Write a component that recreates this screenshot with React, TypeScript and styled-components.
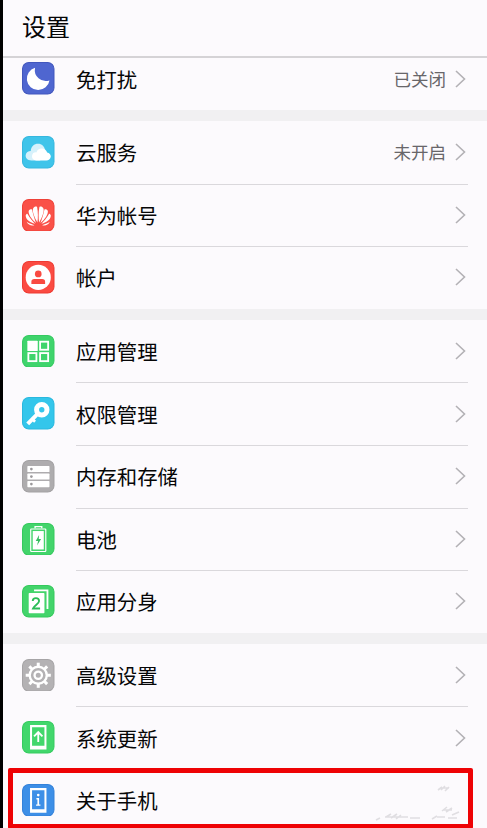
import React from 'react';
import styled, { createGlobalStyle } from 'styled-components';

const GlobalStyle = createGlobalStyle`
  * { box-sizing: border-box; }
  html, body { margin: 0; overflow: hidden; }
  body { background: #fcfafd; }
`;

const Screen = styled.main`
  width: 487px;
  height: 828px;
  overflow: hidden;
  position: relative;
  border-left: 3px solid #000;
  background: #fcfafd;
  color: #060607;
  font-family: 'Noto Sans CJK SC', 'Noto Sans', sans-serif;
`;

const Header = styled.header`
  height: 58px;
  padding: 0 0 5px 19px;
  display: flex;
  align-items: center;
  border-bottom: 2px solid #d5d3d6;
`;

const Title = styled.h1`
  margin: 0;
  font-size: 24px;
  line-height: 36px;
  font-weight: 400;
`;

const Group = styled.section<{ $gap?: boolean }>`
  border-bottom: ${p => (p.$gap ? '11px solid #f1f0f2' : '0')};
`;

const Row = styled.div<{ $short?: boolean }>`
  height: ${p => (p.$short ? '52px' : '62.6px')};
  padding: ${p => (p.$short ? '0 19px 11px' : '0 19px')};
  display: flex;
  align-items: center;
`;

const Content = styled.div<{ $line?: boolean }>`
  flex: 1;
  align-self: stretch;
  margin: 0 0 -1px 21.5px;
  display: flex;
  align-items: center;
  border-bottom: 1px solid ${p => (p.$line ? '#dad8dc' : 'transparent')};
`;

const Label = styled.span`
  flex: 1;
  font-size: 20.4px;
  line-height: 30px;
`;

const Value = styled.span`
  font-size: 17.5px;
  line-height: 26px;
  color: #68666a;
  margin-right: 9px;
`;

const Chevron = styled.svg`
  width: 11px;
  height: 18px;
  margin-right: 2px;
  fill: none;
  stroke: #b3b1b5;
  stroke-width: 1.6;
`;

const Tile = styled.svg`
  width: 32.5px;
  height: 32.5px;
  flex: none;
  display: block;
`;

const Highlight = styled.div`
  position: absolute;
  left: 5px;
  top: 768px;
  width: 465px;
  height: 61px;
  border: 5px solid #ee0205;
  border-radius: 2px;
`;

const Smudges = styled.svg`
  position: absolute;
  left: 370px;
  top: 780px;
  width: 94px;
  height: 42px;
  fill: none;
  stroke: #e0dee2;
  stroke-width: 1.6;
  filter: blur(0.5px);
`;

type IconName =
  | 'moon' | 'cloud' | 'huawei' | 'person' | 'apps' | 'key' | 'storage'
  | 'battery' | 'twin' | 'gear' | 'update' | 'about';

// Petals of the left half of the flower, mirrored for the right half.
const petals = [
  'M46 70C36 54 29 34 34 27C38 22 43 22 45 24C48 38 48 56 46 70Z',
  'M42 72C28 60 18 45 20 35C23 31 27 30 30 31C33 46 38 61 42 72Z',
  'M39 74C25 70 11 62 11 49C12 46 14 44 16 44C23 56 32 67 39 74Z',
  'M37 78C29 80 19 79 14 68C22 73 30 76 37 78Z',
];

const glyphs: Record<IconName, { bg: string; edge: string; art: React.ReactNode }> = {
  moon: {
    bg: '#4f66d0', edge: '#4257bd',
    art: <path fill="#fff" d="M39 17A34 34 0 1 0 82 55A33 33 0 0 1 39 17Z" />,
  },
  cloud: {
    bg: '#3fc4ea', edge: '#36b7de',
    art: (
      <>
        <path fill="#d6f1fb" d="M28 73C16 73 10 66 11 57C12 49 19 45 26 45C27 31 36 23 48 23C59 23 67 31 69 42L54 73Z" />
        <path fill="#fff" d="M43 73C34 73 29 66 30 59C31 51 37 48 43 49C45 41 51 37 59 37C68 37 73 43 75 49C82 50 86 56 86 61C85 69 79 73 73 73Z" />
      </>
    ),
  },
  huawei: {
    bg: '#fa5148', edge: '#ee4138',
    art: (
      <g fill="#fff">
        {petals.map(d => <path key={d} d={d} />)}
        <g transform="translate(97 0) scale(-1 1)">
          {petals.map(d => <path key={d} d={d} />)}
        </g>
      </g>
    ),
  },
  person: {
    bg: '#fb4b42', edge: '#ee3a32',
    art: (
      <>
        <circle cx="48.5" cy="49" r="37.5" fill="#fff" />
        <circle cx="48.5" cy="38.5" r="10" fill="#f94a41" />
        <path fill="#f94a41" d="M28 69V62Q28 54 37 54H60Q69 54 69 62V69Z" />
      </>
    ),
  },
  apps: {
    bg: '#3fd46c', edge: '#35ca61',
    art: (
      <g fill="none" stroke="#fff" strokeWidth="5.5">
        <rect x="16" y="17" width="31" height="31" rx="2" fill="#fff" stroke="none" />
        <rect x="54" y="20" width="24" height="24" />
        <rect x="19" y="54" width="24" height="24" />
        <rect x="54" y="54" width="24" height="24" />
      </g>
    ),
  },
  key: {
    bg: '#34c6eb', edge: '#2ab8de',
    art: (
      <g fill="none" stroke="#fff">
        <circle cx="59" cy="38" r="15.5" strokeWidth="15" />
        <path strokeWidth="12" d="M48 49L17 80" />
        <path strokeWidth="8" d="M29 64L39 74" />
      </g>
    ),
  },
  storage: {
    bg: '#aeacae', edge: '#a3a1a3',
    art: (
      <>
        {[18, 40.5, 63].map(y => (
          <g key={y}>
            <rect x="16" y={y} width="66" height="18" rx="2" fill="#fff" />
            <circle cx="28" cy={y + 9} r="4" fill="#9b999b" />
          </g>
        ))}
      </>
    ),
  },
  battery: {
    bg: '#43d46b', edge: '#35c95d',
    art: (
      <>
        <path d="M39 16V11H59V16" fill="none" stroke="#fff" strokeWidth="4" />
        <rect x="26" y="18" width="45" height="67" rx="2" fill="none" stroke="#fff" strokeWidth="3.5" />
        <rect x="32" y="24" width="33" height="55" fill="#fff" />
        <path d="M51 36L41 54H48L45 67L57 48H50Z" fill="#36bd60" />
      </>
    ),
  },
  twin: {
    bg: '#43d46b', edge: '#35c95d',
    art: (
      <>
        <path d="M36 16H76V72" fill="none" stroke="#fff" strokeWidth="5.5" />
        <rect x="20" y="24" width="47" height="60" rx="2" fill="#fff" />
        <path d="M32 48C32 36 51 36 51 48C51 56 38 60 33 70H54" fill="none" stroke="#2bbd57" strokeWidth="5.5" />
      </>
    ),
  },
  gear: {
    bg: '#b4b2b4', edge: '#a6a4a6',
    art: (
      <g fill="none" stroke="#fff">
        {[0, 45, 90, 135, 180, 225, 270, 315].map(a => (
          <path key={a} strokeWidth="9" d="M48.5 11V24" transform={`rotate(${a} 48.5 48.5)`} />
        ))}
        <circle cx="48.5" cy="48.5" r="25.5" strokeWidth="7" />
        <circle cx="48.5" cy="48.5" r="11" strokeWidth="7" />
      </g>
    ),
  },
  update: {
    bg: '#42d76c', edge: '#36cb60',
    art: (
      <g fill="none" stroke="#fff">
        <path d="M24 12H73V85H24Z M30 19V74H67V19Z" fill="#fff" fillRule="evenodd" stroke="none" />
        <path strokeWidth="5.5" d="M48.5 63V33M36 46L48.5 33L61 46" />
      </g>
    ),
  },
  about: {
    bg: '#3d8fe7', edge: '#3482da',
    art: (
      <g fill="#fff">
        <path d="M24 12H73V86H24Z M30 19V75H67V19Z" fillRule="evenodd" />
        <circle cx="48.5" cy="33" r="4" />
        <path d="M43 42H51V61H55V65H42V61H46V46H43Z" />
      </g>
    ),
  },
};

function Icon({ name }: { name: IconName }) {
  const { bg, edge, art } = glyphs[name];
  return (
    <Tile viewBox="0 0 97 97" aria-hidden="true">
      <rect x="1.5" y="1.5" width="94" height="94" rx="19" fill={bg} stroke={edge} strokeWidth="3" />
      {art}
    </Tile>
  );
}

interface Item {
  icon: IconName;
  label: string;
  value?: string;
  noArrow?: boolean;
}

const groups: Item[][] = [
  [{ icon: 'moon', label: '免打扰', value: '已关闭' }],
  [
    { icon: 'cloud', label: '云服务', value: '未开启' },
    { icon: 'huawei', label: '华为帐号' },
    { icon: 'person', label: '帐户' },
  ],
  [
    { icon: 'apps', label: '应用管理' },
    { icon: 'key', label: '权限管理' },
    { icon: 'storage', label: '内存和存储' },
    { icon: 'battery', label: '电池' },
    { icon: 'twin', label: '应用分身' },
  ],
  [
    { icon: 'gear', label: '高级设置' },
    { icon: 'update', label: '系统更新' },
    { icon: 'about', label: '关于手机', noArrow: true },
  ],
];

export default function App() {
  return (
    <>
      <GlobalStyle />
      <Screen>
        <Header><Title>设置</Title></Header>
        {groups.map((items, g) => (
          <Group key={g} $gap={g < groups.length - 1}>
            {items.map((item, i) => (
              <Row key={item.label} $short={g === 0}>
                <Icon name={item.icon} />
                <Content $line={i < items.length - 1 && item.icon !== 'update'}>
                  <Label>{item.label}</Label>
                  {item.value && <Value>{item.value}</Value>}
                  {!item.noArrow && (
                    <Chevron viewBox="0 0 11 18"><path d="M1 1L9.5 9L1 17" /></Chevron>
                  )}
                </Content>
              </Row>
            ))}
          </Group>
        ))}
        <Smudges viewBox="0 0 94 42">
          <path d="M65 10L69 7M68 10L72 6M72 11L76 7M67 8H76" />
          <path d="M3 40L7 38M13 37L18 34M18 38L24 34M23 39L28 35M28 37H35M37 38H47M12 37H30" />
          <path d="M59 39L64 36M64 37H72M69 31L74 27M73 32L79 28M75 38H84M79 35L86 32M70 30H79" />
        </Smudges>
        <Highlight />
      </Screen>
    </>
  );
}
